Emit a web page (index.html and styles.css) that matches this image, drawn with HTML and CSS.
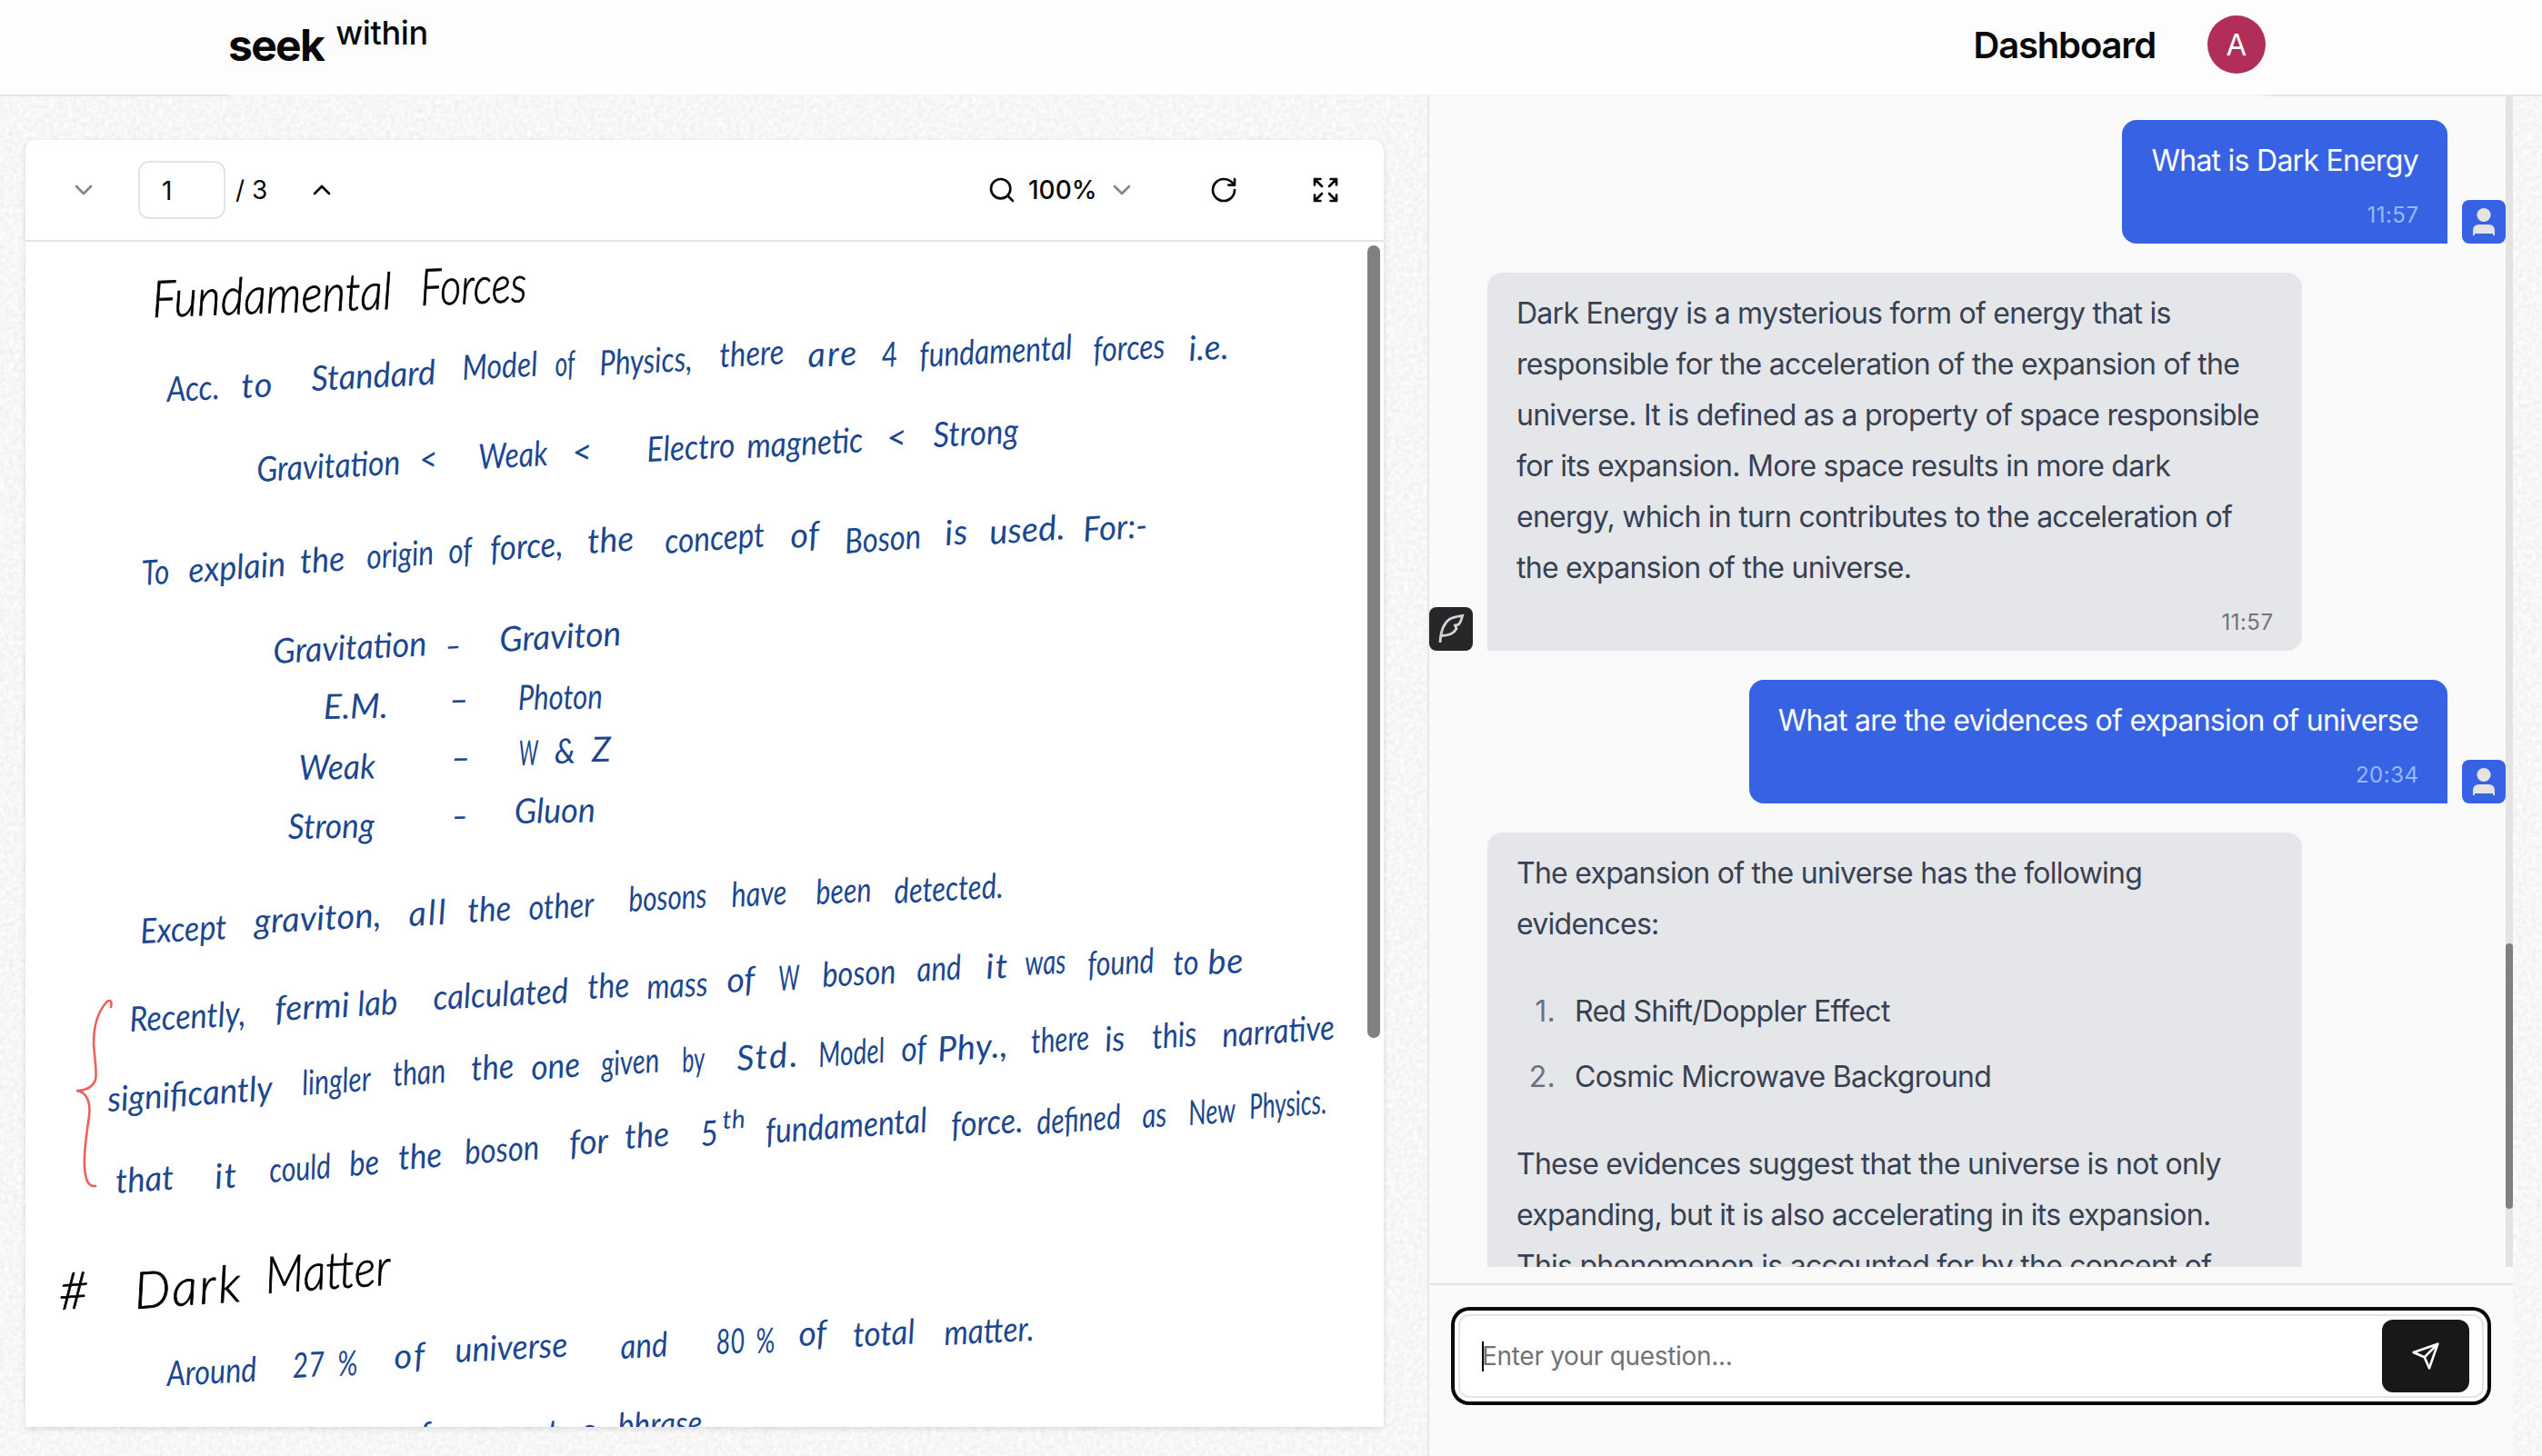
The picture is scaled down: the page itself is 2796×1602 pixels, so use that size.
FILE: index.html
```html
<!DOCTYPE html>
<html lang="en">
<head>
<meta charset="utf-8">
<title>seek within</title>
<link rel="stylesheet" href="styles.css">
</head>
<body>
<svg class="paper-texture" aria-hidden="true">
  <filter id="grain" x="0" y="0" width="100%" height="100%" color-interpolation-filters="sRGB">
    <feTurbulence type="fractalNoise" baseFrequency="0.2" numOctaves="3" seed="4"/>
    <feColorMatrix values="0.09 0 0 0 0.922  0.09 0 0 0 0.922  0.09 0 0 0 0.922  0 0 0 0 1"/>
  </filter>
  <rect width="100%" height="100%" filter="url(#grain)"/>
</svg>

<header class="topbar">
  <div class="topbar-inner">
    <a class="brand"><span class="brand-main">seek</span><span class="brand-sup">within</span></a>
    <nav class="nav"><a class="nav-link">Dashboard</a><span class="account">A</span></nav>
  </div>
</header>

<main class="workspace">
  <section class="doc-column">
    <div class="viewer">
      <div class="toolbar">
        <div class="pager">
          <svg class="icon icon-muted chev" viewBox="0 0 24 24"><path d="m6 9 6 6 6-6"/></svg>
          <div class="page-input">1</div>
          <span class="page-total">/ 3</span>
          <svg class="icon chev" viewBox="0 0 24 24"><path d="m18 15-6-6-6 6"/></svg>
        </div>
        <div class="tools">
          <div class="zoom">
            <svg class="icon" viewBox="0 0 24 24"><circle cx="11" cy="11" r="8"/><path d="m21 21-4.3-4.3"/></svg>
            <span class="zoom-value">100%</span>
            <svg class="icon icon-muted chev" viewBox="0 0 24 24"><path d="m6 9 6 6 6-6"/></svg>
          </div>
          <svg class="icon" viewBox="0 0 24 24"><path d="M21 12a9 9 0 1 1-9-9c2.52 0 4.93 1 6.74 2.74L21 8M21 3v5h-5"/></svg>
          <svg class="icon" viewBox="0 0 24 24"><path d="m21 21-6-6m6 6v-4.8m0 4.8h-4.8M3 16.2V21m0 0h4.8M3 21l6-6M21 7.8V3m0 0h-4.8M21 3l-6 6M3 7.8V3m0 0h4.8M3 3l6 6"/></svg>
        </div>
      </div>
      <div class="page">
        <svg class="notes" viewBox="28 266 1494 1304">
          <g id="words"></g>
          <path class="brace" d="M122 1108C124 1099 119 1100 116 1104C106 1116 103 1130 103 1148C104 1165 107 1180 105 1188C102 1196 94 1200 84 1200C95 1201 100 1212 98 1228C95 1250 92 1266 93 1284C94 1298 97 1306 105 1305"/>
        </svg>
        <div class="page-scroll"></div>
      </div>
    </div>
  </section>

  <section class="chat">
    <div class="messages">
      <div class="thread">
        <div class="row row-user">
          <div class="bubble bubble-user"><p>What is Dark Energy</p><time>11:57</time></div>
          <div class="avatar avatar-user"><svg viewBox="0 0 48 48"><circle cx="24" cy="16.5" r="7.6"/><path d="M12 39v-5q0-7 7-7h10q7 0 7 7v5h-2v-2H14v2z"/></svg></div>
        </div>
        <div class="row">
          <div class="avatar avatar-bot"><svg viewBox="0 0 48 48"><path d="M12 39C12.500 27 16 18 22 13.500C26.500 10.500 31 10.300 36.500 9.500C35.500 13 35 17.500 31.500 19.500L28.500 20L30 23.500C27 29.500 22 31 14 31.500"/></svg></div>
          <div class="bubble bubble-bot"><p>Dark Energy is a mysterious form of energy that is<br>responsible for the acceleration of the expansion of the<br>universe. It is defined as a property of space responsible<br>for its expansion. More space results in more dark<br>energy, which in turn contributes to the acceleration of<br>the expansion of the universe.</p><time>11:57</time></div>
        </div>
        <div class="row row-user">
          <div class="bubble bubble-user"><p>What are the evidences of expansion of universe</p><time>20:34</time></div>
          <div class="avatar avatar-user"><svg viewBox="0 0 48 48"><circle cx="24" cy="16.5" r="7.6"/><path d="M12 39v-5q0-7 7-7h10q7 0 7 7v5h-2v-2H14v2z"/></svg></div>
        </div>
        <div class="row">
          <div class="avatar-gap"></div>
          <div class="bubble bubble-bot">
            <p>The expansion of the universe has the following<br>evidences:</p>
            <ol>
              <li><span class="num">1.</span><span>Red Shift/Doppler Effect</span></li>
              <li><span class="num">2.</span><span>Cosmic Microwave Background</span></li>
            </ol>
            <p>These evidences suggest that the universe is not only<br>expanding, but it is also accelerating in its expansion.<br>This phenomenon is accounted for by the concept of</p>
          </div>
        </div>
      </div>
      <div class="scroll-track"><div class="scroll-thumb"></div></div>
    </div>
    <div class="composer">
      <div class="field">
        <span class="caret"></span><span class="placeholder">Enter your question...</span>
        <div class="send"><svg class="icon" viewBox="0 0 24 24"><path d="m22 2-7 20-4-9-9-4ZM22 2 11 13"/></svg></div>
      </div>
    </div>
  </section>
</main>
<script src="notes.js"></script>
</body>
</html>
```

FILE: styles.css
```css
* { box-sizing: border-box; }

body {
  margin: 0;
  width: 2796px;
  height: 1602px;
  overflow: hidden;
  display: flex;
  flex-direction: column;
  background: #f7f7f7;
  color: #09090b;
  font-family: Inter, "Liberation Sans", sans-serif;
}

p, ol { margin: 0; padding: 0; }

.paper-texture {
  position: absolute;
  inset: 0;
  width: 2796px;
  height: 1602px;
  z-index: -1;
}

.icon {
  width: 32px;
  height: 32px;
  flex: none;
  fill: none;
  stroke: currentColor;
  stroke-width: 2;
  stroke-linecap: round;
  stroke-linejoin: round;
}

.icon-muted { color: #858585; }

/* Header */
.topbar {
  flex: none;
  height: 106px;
  background: #fdfdfd;
  border-bottom: 2px solid #e5e7eb;
}

.topbar-inner {
  width: 2240px;
  height: 106px;
  margin-left: 252px;
  border-bottom: 2px solid #f4f4f5;
  display: flex;
  justify-content: space-between;
}

.brand {
  display: flex;
  align-items: flex-start;
}

.brand-main {
  font-size: 48px;
  font-weight: 700;
  line-height: 60px;
  margin: 20px 0 0 -1px;
  letter-spacing: -1.7px;
}

.brand-sup {
  font-size: 36px;
  font-weight: 500;
  line-height: 44px;
  margin: 14px 0 0 13px;
  letter-spacing: -0.3px;
}

.nav {
  display: flex;
  align-items: flex-start;
  gap: 57px;
}

.nav-link {
  font-size: 40px;
  font-weight: 600;
  line-height: 56px;
  margin-top: 22px;
  letter-spacing: -1.15px;
}

.account {
  width: 64px;
  height: 64px;
  margin-top: 17px;
  border-radius: 50%;
  background: #b02e58;
  color: #fff;
  font-size: 33px;
  line-height: 65px;
  text-align: center;
}

.workspace {
  flex: 1;
  min-height: 0;
  display: flex;
}

/* Document viewer */
.doc-column {
  width: 1570px;
  padding: 48px 48px 32px 28px;
}

.viewer {
  height: 1416px;
  display: flex;
  flex-direction: column;
  background: #fff;
  border-radius: 12px 12px 0 0;
  box-shadow: 0 2px 6px rgba(0, 0, 0, 0.12);
}

.toolbar {
  flex: none;
  height: 112px;
  border-bottom: 2px solid #e4e4e4;
  padding: 0 48px;
  display: flex;
  align-items: center;
  justify-content: space-between;
}

.pager, .zoom { display: flex; align-items: center; }

.page-input {
  width: 96px;
  height: 64px;
  margin-left: 44px;
  padding-left: 24px;
  border: 2px solid #e4e4e4;
  border-radius: 12px;
  font-size: 28px;
  line-height: 62px;
}

.page-total {
  width: 66px;
  margin: 0 13px 0 11px;
  font-size: 28px;
}

.tools {
  display: flex;
  align-items: center;
  gap: 80px;
}

.zoom { width: 164px; }

.zoom-value {
  width: 74px;
  margin: 0 13px 0 13px;
  font-size: 28px;
  font-weight: 500;
}

.page {
  position: relative;
  flex: 1;
  min-height: 0;
  overflow: hidden;
}

.notes {
  display: block;
  width: 1494px;
  height: 1304px;
}

.notes text {
  font-family: Lato, "Open Sans", sans-serif;
  font-style: italic;
  font-size: 38px;
  fill: #1c478f;
}

.notes .title {
  font-size: 56px;
  font-weight: 300;
  fill: #000;
  stroke: #000;
  stroke-width: 0.8;
}

.notes .small { font-size: 28px; }

.brace {
  fill: none;
  stroke: #ec625a;
  stroke-width: 2.6;
  stroke-linecap: round;
}

.page-scroll {
  position: absolute;
  top: 4px;
  right: 4px;
  width: 14px;
  height: 872px;
  border-radius: 7px;
  background: #808080;
}

/* Chat */
.chat {
  width: 1194px;
  border-left: 2px solid #e5e7eb;
  background: #fafafa;
  display: flex;
  flex-direction: column;
}

.messages {
  flex: none;
  height: 1288px;
  overflow: hidden;
  display: flex;
}

.thread {
  width: 1184px;
  padding-top: 26px;
  display: flex;
  flex-direction: column;
  gap: 32px;
}

.row {
  flex: none;
  display: flex;
  align-items: flex-end;
  gap: 16px;
}

.row-user { justify-content: flex-end; }

.bubble {
  padding: 17px 32px 15px;
  font-size: 32px;
  line-height: 56px;
  letter-spacing: -0.74px;
  white-space: nowrap;
}

.bubble time {
  display: block;
  margin-top: 16px;
  font-size: 24px;
  line-height: 32px;
  letter-spacing: 0.5px;
  margin-right: -0.5px;
  text-align: right;
}

.bubble-user {
  background: #3762e3;
  color: #fff;
  border-radius: 16px 16px 0 16px;
}

.bubble-user time { color: #93bbf8; }

.bubble-bot {
  width: 896px;
  background: #e5e6ea;
  color: #374151;
  border-radius: 16px 16px 16px 0;
}

.bubble-bot time { color: #737378; }

.bubble ol {
  list-style: none;
  margin: 40px 0;
  display: flex;
  flex-direction: column;
  gap: 16px;
}

.bubble li { display: flex; }

.num {
  width: 43px;
  margin-right: 21px;
  color: #6b7280;
  letter-spacing: 0.3px;
  text-align: right;
}

.avatar, .avatar-gap { width: 48px; height: 48px; flex: none; }
.avatar { border-radius: 8px; overflow: hidden; }
.avatar svg { display: block; width: 48px; height: 48px; }
.avatar-user { background: #3762e3; }
.avatar-user svg { fill: #e4e4e7; }
.avatar-bot { background: #27272a; }
.avatar-bot svg { fill: none; stroke: #d4d4d4; stroke-width: 2.8; }

.scroll-track {
  width: 8px;
  background: #e4e4e4;
}

.scroll-thumb {
  height: 292px;
  margin-top: 932px;
  border-radius: 4px;
  background: #808080;
}

.composer {
  margin-top: 18px;
  border-top: 2px solid #e4e4e4;
  padding: 32px 32px 0;
}

.field {
  height: 92px;
  padding: 0 14px 0 24px;
  border: 2px solid #e4e4e7;
  border-radius: 12px;
  background: #fff;
  box-shadow: 0 0 0 4px #fff, 0 0 0 8px #09090b;
  display: flex;
  align-items: center;
}

.caret {
  width: 2px;
  height: 33px;
  margin-right: -2px;
  background: #000;
}

.placeholder {
  flex: 1;
  color: #71717a;
  font-size: 28px;
  letter-spacing: -0.3px;
}

.send {
  width: 96px;
  height: 80px;
  border-radius: 12px;
  background: #18181b;
  color: #fff;
  display: flex;
  align-items: center;
  justify-content: center;
}
```

FILE: notes.js
```js
// Lines of the notebook page: [slope, class, [word, x, baseline, width]...]
const lines = [
  [-2, "title", ["Fundamental", 168, 349, 264], ["Forces", 463, 336, 117]],
  [-3, "", ["Acc.", 184, 442, 58], ["to", 266, 438, 34], ["Standard", 343, 430, 137], ["Model", 509, 418, 83], ["of", 611, 414, 22], ["Physics,", 660, 413, 102], ["there", 792, 404, 71], ["are", 889, 404, 54], ["4", 970, 404, 18], ["fundamental", 1012, 404, 168], ["forces", 1203, 398, 79], ["i.e.", 1308, 397, 44]],
  [-3, "", ["Gravitation", 283, 530, 158], ["<", 462, 519, 20], ["Weak", 527, 516, 76], ["<", 630, 511, 22], ["Electro", 712, 508, 97], ["magnetic", 822, 504, 128], ["<", 976, 495, 23], ["Strong", 1027, 492, 94]],
  [-4, "", ["To", 157, 644, 30], ["explain", 208, 641, 107], ["the", 331, 631, 49], ["origin", 404, 626, 74], ["of", 494, 620, 26], ["force,", 540, 617, 80], ["the", 647, 609, 51], ["concept", 732, 609, 110], ["of", 870, 603, 32], ["Boson", 930, 609, 84], ["is", 1040, 600, 25], ["used.", 1089, 599, 83], ["For:-", 1192, 596, 71]],
  [-3, "", ["Gravitation", 301, 730, 169], ["–", 490, 724, 18], ["Graviton", 550, 717, 134]],
  [-1, "", ["E.M.", 356, 791, 71], ["–", 494, 783, 22], ["Photon", 570, 781, 93]],
  [-1, "", ["Weak", 329, 858, 84], ["–", 496, 847, 22], ["W", 571, 842, 21], ["&", 610, 840, 23], ["Z", 651, 838, 22]],
  [-1, "", ["Strong", 317, 923, 95], ["–", 497, 911, 18], ["Gluon", 566, 906, 89]],
  [-3, "", ["Except", 155, 1038, 95], ["graviton,", 280, 1027, 140], ["all", 450, 1019, 41], ["the", 515, 1015, 48], ["other", 582, 1012, 72], ["bosons", 692, 1003, 86], ["have", 805, 998, 61], ["been", 898, 995, 61], ["detected.", 984, 994, 120]],
  [-3, "", ["Recently,", 143, 1135, 128], ["fermi", 303, 1123, 82], ["lab", 394, 1118, 44], ["calculated", 477, 1111, 149], ["the", 647, 1099, 46], ["mass", 712, 1099, 67], ["of", 800, 1092, 31], ["W", 857, 1090, 23], ["boson", 905, 1086, 81], ["and", 1009, 1080, 49], ["it", 1085, 1077, 24], ["was", 1128, 1073, 45], ["found", 1197, 1074, 73], ["to", 1291, 1073, 28], ["be", 1329, 1072, 39]],
  [-4, "", ["significantly", 119, 1223, 182], ["lingler", 333, 1205, 76], ["than", 433, 1195, 58], ["the", 519, 1189, 47], ["one", 585, 1188, 54], ["given", 662, 1184, 64], ["by", 751, 1180, 25], ["Std.", 811, 1178, 67], ["Model", 901, 1174, 73], ["of", 992, 1168, 28], ["Phy.,", 1032, 1168, 77], ["there", 1135, 1159, 64], ["is", 1216, 1157, 22], ["this", 1268, 1154, 49], ["narrative", 1345, 1152, 124]],
  [-4, "", ["that", 128, 1313, 64], ["it", 237, 1308, 24], ["could", 297, 1301, 68], ["be", 385, 1294, 33], ["the", 439, 1287, 48], ["boson", 512, 1281, 82], ["for", 627, 1271, 43], ["the", 688, 1264, 49], ["5", 771, 1261, 20], ["fundamental", 843, 1258, 178], ["force.", 1047, 1251, 79], ["defined", 1141, 1248, 93], ["as", 1257, 1241, 27], ["New", 1308, 1238, 52], ["Physics.", 1375, 1231, 85]],
  [-3, "small", ["th", 795, 1242, 25]],
  [-4, "title", ["#", 66, 1441, 41], ["Dark", 149, 1440, 117], ["Matter", 293, 1423, 138]],
  [-3, "", ["Around", 184, 1525, 99], ["27", 322, 1516, 36], ["%", 372, 1514, 22], ["of", 434, 1506, 34], ["universe", 501, 1499, 124], ["and", 683, 1495, 52], ["80", 788, 1490, 32], ["%", 832, 1489, 21], ["of", 879, 1481, 31], ["total", 939, 1482, 68], ["matter.", 1039, 1480, 99]],
  [-2, "", ["f", 462, 1592, 12], ["to", 602, 1589, 56], ["bhrase", 680, 1582, 93]],
];

const layer = document.getElementById("words");
for (const [slope, style, ...words] of lines) {
  for (const [word, x, y, width] of words) {
    const el = document.createElementNS("http://www.w3.org/2000/svg", "text");
    el.textContent = word;
    el.setAttribute("transform", `translate(${x} ${y}) rotate(${slope})`);
    if (style) el.setAttribute("class", style);
    layer.append(el);

    const natural = el.getComputedTextLength();
    el.setAttribute("textLength", width);
    el.setAttribute("lengthAdjust", natural < width ? "spacing" : "spacingAndGlyphs");
  }
}
```
